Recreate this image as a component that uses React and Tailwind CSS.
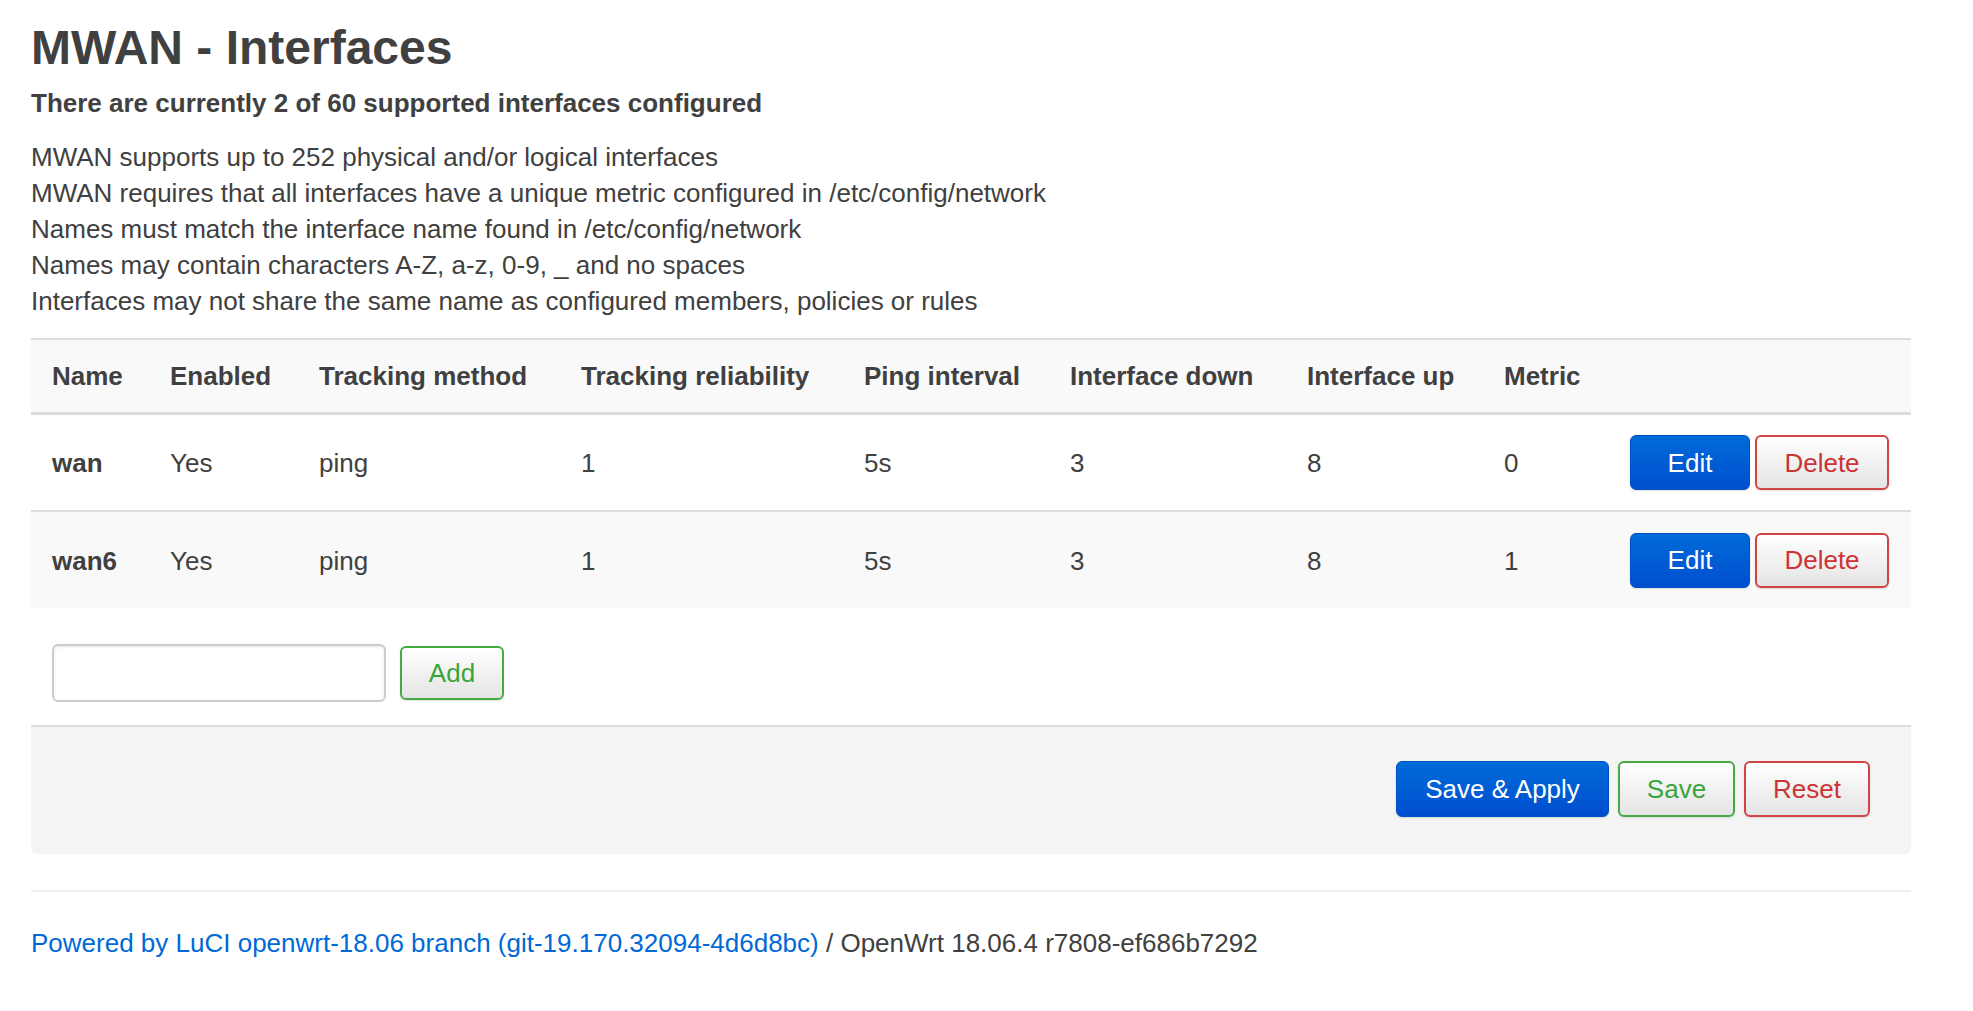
import React, { useState } from "react";

const font = { fontFamily: '"Liberation Sans", Arial, sans-serif' };

const columns = [
  { label: "Name", width: "w-[118px]" },
  { label: "Enabled", width: "w-[149px]" },
  { label: "Tracking method", width: "w-[262px]" },
  { label: "Tracking reliability", width: "w-[283px]" },
  { label: "Ping interval", width: "w-[206px]" },
  { label: "Interface down", width: "w-[237px]" },
  { label: "Interface up", width: "w-[197px]" },
  { label: "Metric", width: "w-[126px]" },
];

const interfaces = [
  { name: "wan", enabled: "Yes", method: "ping", reliability: "1", interval: "5s", down: "3", up: "8", metric: "0" },
  { name: "wan6", enabled: "Yes", method: "ping", reliability: "1", interval: "5s", down: "3", up: "8", metric: "1" },
];

const notes = [
  "MWAN supports up to 252 physical and/or logical interfaces",
  "MWAN requires that all interfaces have a unique metric configured in /etc/config/network",
  "Names must match the interface name found in /etc/config/network",
  "Names may contain characters A-Z, a-z, 0-9, _ and no spaces",
  "Interfaces may not share the same name as configured members, policies or rules",
];

const Button = ({ kind, className = "", children }) => {
  const styles = {
    blue: "bg-gradient-to-b from-[#006bd9] to-[#004ecf] border border-[#0052c4] text-white",
    red: "bg-gradient-to-b from-white to-[#e4e4e4] border-2 border-[#cf4444] text-[#cc3333]",
    green: "bg-gradient-to-b from-white to-[#e4e4e4] border-2 border-[#44aa44] text-[#3aa53a]",
  };
  return (
    <button
      className={`flex items-center justify-center rounded-[6px] text-[26px] leading-none shadow-[0_1px_2px_rgba(0,0,0,0.12)] ${styles[kind]} ${className}`}
    >
      {children}
    </button>
  );
};

const App = () => {
  const [newName, setNewName] = useState("");

  return (
    <div style={font} className="min-h-screen bg-white text-[#404040] pl-[31px] pt-[20px]">
      <div className="w-[1880px]">
        <h2 className="text-[48px] leading-[56px] font-bold">MWAN - Interfaces</h2>
        <h3 className="mt-[9px] text-[26px] leading-[36px] font-bold">
          There are currently 2 of 60 supported interfaces configured
        </h3>
        <div className="mt-[18px] text-[26px] leading-[36px]">
          {notes.map((n) => (
            <div key={n}>{n}</div>
          ))}
        </div>

        <div className="mt-[19px]">
          <div className="flex h-[77px] items-center border-t-2 border-b-[3px] border-[#dddddd] bg-[#f9f9f9] text-[26px] font-bold">
            {columns.map((c) => (
              <div key={c.label} className={`${c.width} shrink-0 pl-[21px] whitespace-nowrap`}>
                {c.label}
              </div>
            ))}
            <div className="flex-1" />
          </div>

          {interfaces.map((row, i) => (
            <div
              key={row.name}
              className={`flex items-center text-[26px] ${
                i === 0 ? "bg-white border-b-2 border-[#dddddd] h-[97px]" : "bg-[#f9f9f9] h-[96px]"
              }`}
            >
              <div className="w-[118px] shrink-0 pl-[21px] pt-[2px] font-bold">{row.name}</div>
              <div className="w-[149px] shrink-0 pl-[21px] pt-[2px]">{row.enabled}</div>
              <div className="w-[262px] shrink-0 pl-[21px] pt-[2px]">{row.method}</div>
              <div className="w-[283px] shrink-0 pl-[21px] pt-[2px]">{row.reliability}</div>
              <div className="w-[206px] shrink-0 pl-[21px] pt-[2px]">{row.interval}</div>
              <div className="w-[237px] shrink-0 pl-[21px] pt-[2px]">{row.down}</div>
              <div className="w-[197px] shrink-0 pl-[21px] pt-[2px]">{row.up}</div>
              <div className="w-[126px] shrink-0 pl-[21px] pt-[2px]">{row.metric}</div>
              <div className="flex flex-1 justify-end gap-[5px] pr-[22px]">
                <Button kind="blue" className="w-[120px] h-[55px]">Edit</Button>
                <Button kind="red" className="w-[134px] h-[55px]">Delete</Button>
              </div>
            </div>
          ))}
        </div>

        <div className="flex h-[117px] items-start pt-[36px] pl-[21px]">
          <div className="flex items-center gap-[14px]">
            <input
              value={newName}
              onChange={(e) => setNewName(e.target.value)}
              className="w-[334px] h-[58px] rounded-[6px] border-2 border-[#cccccc] bg-white px-3 text-[26px] shadow-[inset_0_1px_3px_rgba(0,0,0,0.1)] outline-none"
            />
            <Button kind="green" className="w-[104px] h-[54px]">Add</Button>
          </div>
        </div>

        <div className="flex h-[129px] items-start justify-end gap-[9px] rounded-b-[6px] border-t-2 border-[#dddddd] bg-[#f4f4f4] pt-[34px] pr-[41px]">
          <Button kind="blue" className="w-[213px] h-[56px]">Save &amp; Apply</Button>
          <Button kind="green" className="w-[117px] h-[56px]">Save</Button>
          <Button kind="red" className="w-[126px] h-[56px]">Reset</Button>
        </div>

        <div className="mt-[36px] border-t-2 border-[#eeeeee]" />
        <div className="mt-[33px] text-[26px] leading-[36px]">
          <a href="#" className="text-[#0069d6]">
            Powered by LuCI openwrt-18.06 branch (git-19.170.32094-4d6d8bc)
          </a>{" "}
          / OpenWrt 18.06.4 r7808-ef686b7292
        </div>
      </div>
    </div>
  );
};

export default App;
